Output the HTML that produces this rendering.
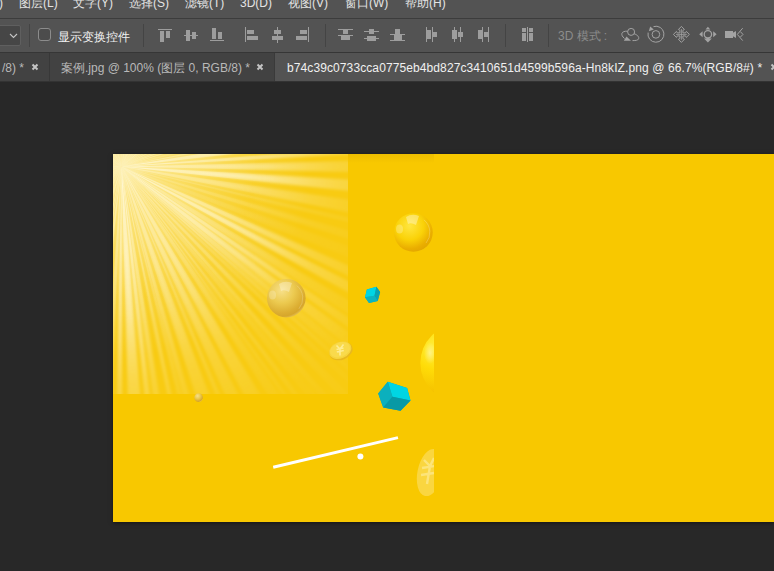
<!DOCTYPE html>
<html><head><meta charset="utf-8">
<style>
*{margin:0;padding:0;box-sizing:border-box}
html,body{width:774px;height:571px;overflow:hidden;background:#282828;font-family:"Liberation Sans",sans-serif;}
.abs{position:absolute}
.cj{display:inline-block;white-space:nowrap}
#menu{position:absolute;left:0;top:0;width:774px;height:18px;background:#535353}
#line1{position:absolute;left:0;top:18px;width:774px;height:1px;background:#3c3c3c}
#opts{position:absolute;left:0;top:19px;width:774px;height:33px;background:#535353}
#line2{position:absolute;left:0;top:52px;width:774px;height:1px;background:#363636}
#tabs{position:absolute;left:0;top:53px;width:774px;height:28px;background:#424242}
#canvas{position:absolute;left:0;top:81px;width:774px;height:490px;background:#282828}
.mt{position:absolute;top:-4px;font-size:12px;color:#e4e4e4;white-space:nowrap;line-height:14px}
.sep{position:absolute;width:1px;background:#444;top:24px;height:23px}
.ic{position:absolute;background:#9d9d9d}
.tt{position:absolute;top:61px;font-size:12px;color:#b9b9b9;white-space:nowrap;line-height:14px}
</style></head><body>
<div id="menu"></div>
<div id="line1"></div>
<div id="opts"></div>
<div id="line2"></div>
<div id="tabs"></div>
<div id="canvas"></div>
<div class="abs" style="left:0;top:81px;width:774px;height:1px;background:#333"></div>

<!-- menu text -->
<div class="mt" style="left:-1px">)</div>
<div class="mt" style="left:19px"><span class="cj" style="width:24px">图层</span>(L)</div>
<div class="mt" style="left:73px"><span class="cj" style="width:24px">文字</span>(Y)</div>
<div class="mt" style="left:129px"><span class="cj" style="width:24px">选择</span>(S)</div>
<div class="mt" style="left:185px"><span class="cj" style="width:24px">滤镜</span>(T)</div>
<div class="mt" style="left:240px">3D(D)</div>
<div class="mt" style="left:288px"><span class="cj" style="width:24px">视图</span>(V)</div>
<div class="mt" style="left:345px"><span class="cj" style="width:24px">窗口</span>(W)</div>
<div class="mt" style="left:405px"><span class="cj" style="width:24px">帮助</span>(H)</div>

<!-- options bar -->
<div class="abs" style="left:-2px;top:25px;width:23px;height:21px;background:#464646;border:1px solid #5f5f5f;border-radius:2px"></div>
<svg class="abs" style="left:9px;top:33px" width="10" height="6"><path d="M1 1 L4.5 4.5 L8 1" stroke="#c4c4c4" stroke-width="1.1" fill="none"/></svg>
<div class="sep" style="left:29px"></div>
<div class="abs" style="left:38px;top:28px;width:13px;height:13px;border:1px solid #8c8c8c;border-radius:3px;background:#4c4c4c"></div>
<div class="abs" style="left:58px;top:30px;font-size:12px;color:#f0f0f0;line-height:14px;white-space:nowrap"><span class="cj" style="width:72px">显示变换控件</span></div>
<div class="sep" style="left:143px"></div>
<div class="ic" style="left:158px;top:29px;width:14px;height:1px"></div>
<div class="ic" style="left:160px;top:31px;width:4px;height:11px"></div>
<div class="ic" style="left:166px;top:31px;width:4px;height:7px"></div>
<div class="ic" style="left:184px;top:35px;width:14px;height:1px"></div>
<div class="ic" style="left:186px;top:30px;width:4px;height:11px"></div>
<div class="ic" style="left:192px;top:32px;width:4px;height:7px"></div>
<div class="ic" style="left:212px;top:28px;width:4px;height:11px"></div>
<div class="ic" style="left:218px;top:32px;width:4px;height:7px"></div>
<div class="ic" style="left:210px;top:40px;width:14px;height:1px"></div>
<div class="ic" style="left:245px;top:27px;width:1px;height:15px"></div>
<div class="ic" style="left:247px;top:30px;width:7px;height:4px"></div>
<div class="ic" style="left:247px;top:36px;width:11px;height:4px"></div>
<div class="ic" style="left:277px;top:27px;width:1px;height:16px"></div>
<div class="ic" style="left:274px;top:30px;width:7px;height:4px"></div>
<div class="ic" style="left:272px;top:36px;width:11px;height:4px"></div>
<div class="ic" style="left:308px;top:27px;width:1px;height:15px"></div>
<div class="ic" style="left:300px;top:30px;width:7px;height:4px"></div>
<div class="ic" style="left:296px;top:36px;width:11px;height:4px"></div>
<div class="ic" style="left:338px;top:29px;width:15px;height:1px"></div>
<div class="ic" style="left:343px;top:30px;width:5px;height:4px"></div>
<div class="ic" style="left:338px;top:35px;width:15px;height:1px"></div>
<div class="ic" style="left:341px;top:36px;width:9px;height:4px"></div>
<div class="ic" style="left:369px;top:29px;width:5px;height:5px"></div>
<div class="ic" style="left:364px;top:31px;width:15px;height:1px"></div>
<div class="ic" style="left:367px;top:36px;width:9px;height:5px"></div>
<div class="ic" style="left:364px;top:38px;width:15px;height:1px"></div>
<div class="ic" style="left:395px;top:29px;width:5px;height:5px"></div>
<div class="ic" style="left:390px;top:34px;width:15px;height:1px"></div>
<div class="ic" style="left:394px;top:35px;width:8px;height:5px"></div>
<div class="ic" style="left:390px;top:40px;width:15px;height:1px"></div>
<div class="ic" style="left:426px;top:27px;width:1px;height:15px"></div>
<div class="ic" style="left:427px;top:30px;width:4px;height:9px"></div>
<div class="ic" style="left:432px;top:27px;width:1px;height:15px"></div>
<div class="ic" style="left:433px;top:32px;width:4px;height:5px"></div>
<div class="ic" style="left:452px;top:30px;width:5px;height:9px"></div>
<div class="ic" style="left:454px;top:27px;width:1px;height:15px"></div>
<div class="ic" style="left:458px;top:32px;width:5px;height:5px"></div>
<div class="ic" style="left:460px;top:27px;width:1px;height:15px"></div>
<div class="ic" style="left:478px;top:30px;width:4px;height:9px"></div>
<div class="ic" style="left:482px;top:27px;width:1px;height:15px"></div>
<div class="ic" style="left:484px;top:32px;width:4px;height:5px"></div>
<div class="ic" style="left:488px;top:27px;width:1px;height:15px"></div>
<div class="ic" style="left:522px;top:28px;width:4px;height:4px"></div>
<div class="ic" style="left:522px;top:33px;width:4px;height:8px"></div>
<div class="ic" style="left:527px;top:27px;width:1px;height:15px"></div>
<div class="ic" style="left:529px;top:28px;width:4px;height:4px"></div>
<div class="ic" style="left:529px;top:33px;width:4px;height:8px"></div>
<div class="sep" style="left:325px"></div>
<div class="sep" style="left:505px"></div>
<div class="sep" style="left:548px"></div>
<div class="abs" style="left:558px;top:29px;font-size:12px;color:#8c8c8c;line-height:14px;white-space:nowrap">3D <span class="cj" style="width:24px">模式</span><span style="margin-left:3px">:</span></div>
<svg class="abs" style="left:615px;top:22px" width="159" height="26" viewBox="615 22 159 26">
 <g fill="none" stroke="#a3a3a3" stroke-width="1">
  <circle cx="631.1" cy="31.9" r="3.5"/>
  <path d="M627.6 31.2 C 621.5 30.8, 619.8 34.5, 624.5 38.5"/>
  <path d="M634 33.6 C 637.5 35, 639.5 37, 638.5 39 C 637.8 40.3, 636 40.6, 632.5 40.6"/>
  <path d="M653.5 26.6 A8 8 0 1 1 648.1 32.6" stroke-width="1"/>
  <circle cx="655.9" cy="34.4" r="3.8"/>
  <path d="M681.40 26.40 L684.40 29.50 L682.90 30.30 L682.90 32.90 L685.50 32.90 L686.30 31.40 L689.40 34.40 L686.30 37.40 L685.50 35.90 L682.90 35.90 L682.90 38.50 L684.40 39.30 L681.40 42.40 L678.40 39.30 L679.90 38.50 L679.90 35.90 L677.30 35.90 L676.50 37.40 L673.40 34.40 L676.50 31.40 L677.30 32.90 L679.90 32.90 L679.90 30.30 L678.40 29.50Z" stroke-width="0.95"/>
  <path d="M681.4 29 V39.8 M676 34.4 H686.8" stroke-width="0.8"/>
  <path d="M742.7 28.2 L737.3 34.4 L742.7 40.6 M740.3 31.6 L743 34.4 L740.3 37.2"/>
 </g>
 <g fill="#a3a3a3">
  <path d="M623.8 40.8 L631 40.8 L626.5 36.6 Z"/>
  <path d="M648.8 31.2 L650.2 26.6 L653.8 29.6 Z"/>
  
  
  
  
  <rect x="725" y="31" width="8" height="7"/>
  <path d="M732.5 33 L736 31 L736 38 L732.5 36 Z"/>
 </g>
 <circle cx="707.9" cy="34.3" r="3.7" fill="none" stroke="#a3a3a3" stroke-width="1.3"/>
 <g fill="#a3a3a3">
  <path d="M707.9 26.8 L710.3 29.6 L705.5 29.6Z"/>
  <path d="M699.2 34.3 L702.6 31.3 L702.6 37.3Z"/>
  <path d="M716.6 34.3 L713.2 31.3 L713.2 37.3Z"/>
  <path d="M707.9 42.4 L711.8 38.6 L709.2 38.6 L709.2 38 L706.6 38 L706.6 38.6 L704 38.6Z"/>
 </g>
</svg>



<!-- tabs -->
<div class="tt" style="left:2px">/8) *</div>
<svg class="abs" style="left:31px;top:63px" width="8" height="8"><path d="M1.5 1.5 L6.5 6.5 M6.5 1.5 L1.5 6.5" stroke="#c4c4c4" stroke-width="2"/></svg>
<div class="abs" style="left:49px;top:53px;width:1px;height:28px;background:#383838"></div>
<div class="tt" style="left:61px"><span class="cj" style="width:24px">案例</span>.jpg @ 100% (<span class="cj" style="width:24px">图层</span> 0, RGB/8) *</div>
<svg class="abs" style="left:256px;top:63px" width="8" height="8"><path d="M1.5 1.5 L6.5 6.5 M6.5 1.5 L1.5 6.5" stroke="#c4c4c4" stroke-width="2"/></svg>
<div class="abs" style="left:274px;top:53px;width:1px;height:28px;background:#3a3a3a"></div>
<div class="abs" style="left:275px;top:53px;width:499px;height:28px;background:#535353"></div>
<div class="tt" style="left:287px;color:#f0f0f0;letter-spacing:0.1px">b74c39c0733cca0775eb4bd827c3410651d4599b596a-Hn8kIZ.png @ 66.7%(RGB/8#) *</div>
<svg class="abs" style="left:770px;top:63px" width="8" height="8"><path d="M1.5 1.5 L6.5 6.5 M6.5 1.5 L1.5 6.5" stroke="#c4c4c4" stroke-width="2"/></svg>

<!-- document -->
<div class="abs" style="left:113px;top:154px;width:661px;height:368px;box-shadow:0 1px 4px rgba(0,0,0,0.5)"></div>
<svg class="abs" style="left:113px;top:154px" width="661" height="368" viewBox="113 154 661 368">
 <defs>
  <radialGradient id="fade" gradientUnits="userSpaceOnUse" cx="121.5" cy="166.5" r="330">
   <stop offset="0" stop-color="#fff" stop-opacity="0.4"/>
   <stop offset="0.25" stop-color="#fff" stop-opacity="0.85"/>
   <stop offset="0.45" stop-color="#fff" stop-opacity="0.65"/>
   <stop offset="0.65" stop-color="#fff" stop-opacity="0.3"/>
   <stop offset="0.85" stop-color="#fff" stop-opacity="0.1"/>
   <stop offset="1" stop-color="#fff" stop-opacity="0.03"/>
  </radialGradient>
  <mask id="rm" maskUnits="userSpaceOnUse" x="113" y="154" width="235" height="240">
   <rect x="113" y="154" width="235" height="240" fill="url(#fade)"/>
  </mask>
  <radialGradient id="glow" gradientUnits="userSpaceOnUse" cx="121.5" cy="166.5" r="190">
   <stop offset="0" stop-color="#fffbe6" stop-opacity="0.7"/>
   <stop offset="0.15" stop-color="#fff8d8" stop-opacity="0.5"/>
   <stop offset="0.45" stop-color="#fff3c0" stop-opacity="0.28"/>
   <stop offset="0.7" stop-color="#fff3c0" stop-opacity="0.1"/>
   <stop offset="1" stop-color="#fff" stop-opacity="0"/>
  </radialGradient>
  <linearGradient id="topshade" x1="0" y1="0" x2="0" y2="1">
   <stop offset="0" stop-color="#d9a800" stop-opacity="0.35"/>
   <stop offset="1" stop-color="#d9a800" stop-opacity="0"/>
  </linearGradient>
  <radialGradient id="sph" cx="0.4" cy="0.33" r="0.72">
   <stop offset="0" stop-color="#ffe640"/>
   <stop offset="0.5" stop-color="#fad208"/>
   <stop offset="0.82" stop-color="#eaae00"/>
   <stop offset="0.95" stop-color="#e4a800"/>
   <stop offset="1" stop-color="#ecbc20"/>
  </radialGradient>
  <radialGradient id="sph2" cx="0.38" cy="0.3" r="0.72">
   <stop offset="0" stop-color="#f7e08a"/>
   <stop offset="0.45" stop-color="#ecca50"/>
   <stop offset="0.8" stop-color="#dcae32"/>
   <stop offset="0.93" stop-color="#d6a62c"/>
   <stop offset="1" stop-color="#e2ba4a"/>
  </radialGradient>
  <filter id="bl" x="-5%" y="-5%" width="110%" height="110%"><feGaussianBlur stdDeviation="0.5"/></filter>
  <radialGradient id="sph3" cx="0.2" cy="0.3" r="0.8">
   <stop offset="0" stop-color="#fff040"/>
   <stop offset="0.35" stop-color="#ffdc08"/>
   <stop offset="0.7" stop-color="#f6c400"/>
   <stop offset="1" stop-color="#e8b000"/>
  </radialGradient>
  <radialGradient id="hl">
   <stop offset="0" stop-color="#fff8c0" stop-opacity="0.6"/>
   <stop offset="1" stop-color="#fff8c0" stop-opacity="0"/>
  </radialGradient>
  <filter id="bl2" x="-5%" y="-5%" width="110%" height="110%"><feGaussianBlur stdDeviation="1.8"/></filter>
  <radialGradient id="faden" gradientUnits="userSpaceOnUse" cx="121.5" cy="166.5" r="160">
   <stop offset="0" stop-color="#fff" stop-opacity="1"/>
   <stop offset="0.4" stop-color="#fff" stop-opacity="0.6"/>
   <stop offset="1" stop-color="#fff" stop-opacity="0"/>
  </radialGradient>
  <mask id="rmn" maskUnits="userSpaceOnUse" x="113" y="154" width="235" height="240">
   <rect x="113" y="154" width="235" height="240" fill="url(#faden)"/>
  </mask>
  <clipPath id="lay"><rect x="113" y="154" width="321" height="368"/></clipPath>
 </defs>
 <rect x="113" y="154" width="661" height="368" fill="#f8c800"/>
 <rect x="348" y="154" width="86" height="9" fill="url(#topshade)"/>
 <rect x="113" y="154" width="235" height="240" fill="#fff" fill-opacity="0.07"/>
 <g mask="url(#rm)" fill="#fffae0" filter="url(#bl2)">
<path d="M121.5 166.5 L-298.5 166.5 L-298.2 150.2Z" fill-opacity="0.46"/>
<path d="M121.5 166.5 L-297.5 137.0 L-295.3 114.7Z" fill-opacity="0.46"/>
<path d="M121.5 166.5 L-293.2 99.8 L-292.4 94.9Z" fill-opacity="0.38"/>
<path d="M121.5 166.5 L-289.5 79.9 L-285.7 63.6Z" fill-opacity="0.51"/>
<path d="M121.5 166.5 L-284.7 59.9 L-281.2 47.1Z" fill-opacity="0.31"/>
<path d="M121.5 166.5 L-278.3 37.7 L-273.3 23.2Z" fill-opacity="0.24"/>
<path d="M121.5 166.5 L-271.5 18.3 L-268.0 9.3Z" fill-opacity="0.51"/>
<path d="M121.5 166.5 L-263.0 -2.6 L-259.9 -9.4Z" fill-opacity="0.48"/>
<path d="M121.5 166.5 L-258.2 -13.1 L-251.0 -27.6Z" fill-opacity="0.28"/>
<path d="M121.5 166.5 L-249.9 -29.6 L-239.7 -47.9Z" fill-opacity="0.30"/>
<path d="M121.5 166.5 L-237.0 -52.4 L-224.4 -71.7Z" fill-opacity="0.50"/>
<path d="M121.5 166.5 L-220.8 -76.8 L-207.2 -95.0Z" fill-opacity="0.40"/>
<path d="M121.5 166.5 L-199.8 -104.0 L-194.4 -110.3Z" fill-opacity="0.52"/>
<path d="M121.5 166.5 L-186.5 -119.1 L-170.5 -135.4Z" fill-opacity="0.51"/>
<path d="M121.5 166.5 L-165.9 -139.8 L-157.6 -147.4Z" fill-opacity="0.29"/>
<path d="M121.5 166.5 L-154.4 -150.2 L-150.1 -153.9Z" fill-opacity="0.33"/>
<path d="M121.5 166.5 L-141.9 -160.6 L-138.5 -163.4Z" fill-opacity="0.44"/>
<path d="M121.5 166.5 L-133.0 -167.6 L-124.7 -173.8Z" fill-opacity="0.49"/>
<path d="M121.5 166.5 L-117.5 -178.9 L-108.8 -184.7Z" fill-opacity="0.38"/>
<path d="M121.5 166.5 L-98.7 -191.2 L-94.0 -194.0Z" fill-opacity="0.53"/>
<path d="M121.5 166.5 L-91.8 -195.3 L-75.5 -204.4Z" fill-opacity="0.49"/>
<path d="M121.5 166.5 L-73.4 -205.6 L-56.0 -214.2Z" fill-opacity="0.35"/>
<path d="M121.5 166.5 L-46.6 -218.4 L-42.4 -220.2Z" fill-opacity="0.25"/>
<path d="M121.5 166.5 L-38.1 -222.0 L-16.9 -230.0Z" fill-opacity="0.30"/>
<path d="M121.5 166.5 L-4.9 -234.0 L16.4 -240.1Z" fill-opacity="0.52"/>
<path d="M121.5 166.5 L23.2 -241.8 L34.1 -244.3Z" fill-opacity="0.40"/>
<path d="M121.5 166.5 L46.8 -246.8 L53.2 -247.9Z" fill-opacity="0.46"/>
<path d="M121.5 166.5 L66.4 -249.9 L87.0 -252.1Z" fill-opacity="0.25"/>
<path d="M121.5 166.5 L102.4 -253.1 L108.5 -253.3Z" fill-opacity="0.34"/>
<path d="M121.5 166.5 L119.2 -253.5 L141.1 -253.0Z" fill-opacity="0.34"/>
<path d="M121.5 166.5 L156.1 -252.1 L170.8 -250.6Z" fill-opacity="0.33"/>
<path d="M121.5 166.5 L177.4 -249.8 L185.1 -248.7Z" fill-opacity="0.26"/>
<path d="M121.5 166.5 L189.3 -248.0 L206.6 -244.8Z" fill-opacity="0.54"/>
<path d="M121.5 166.5 L210.9 -243.9 L216.1 -242.7Z" fill-opacity="0.54"/>
<path d="M121.5 166.5 L225.5 -240.4 L237.2 -237.3Z" fill-opacity="0.31"/>
<path d="M121.5 166.5 L247.2 -234.2 L266.3 -227.8Z" fill-opacity="0.38"/>
<path d="M121.5 166.5 L273.8 -224.9 L278.9 -222.9Z" fill-opacity="0.51"/>
<path d="M121.5 166.5 L281.4 -221.9 L294.0 -216.4Z" fill-opacity="0.49"/>
<path d="M121.5 166.5 L297.7 -214.8 L314.2 -206.7Z" fill-opacity="0.52"/>
<path d="M121.5 166.5 L323.9 -201.5 L340.6 -191.8Z" fill-opacity="0.27"/>
<path d="M121.5 166.5 L347.6 -187.4 L353.7 -183.5Z" fill-opacity="0.49"/>
<path d="M121.5 166.5 L358.9 -179.9 L369.6 -172.4Z" fill-opacity="0.54"/>
<path d="M121.5 166.5 L380.8 -163.9 L398.5 -149.2Z" fill-opacity="0.38"/>
<path d="M121.5 166.5 L405.2 -143.2 L418.4 -130.6Z" fill-opacity="0.38"/>
<path d="M121.5 166.5 L422.8 -126.1 L431.1 -117.3Z" fill-opacity="0.28"/>
<path d="M121.5 166.5 L436.1 -111.8 L451.0 -94.0Z" fill-opacity="0.53"/>
<path d="M121.5 166.5 L457.7 -85.3 L465.8 -74.0Z" fill-opacity="0.34"/>
<path d="M121.5 166.5 L467.8 -71.2 L473.1 -63.2Z" fill-opacity="0.47"/>
<path d="M121.5 166.5 L480.7 -51.1 L486.4 -41.4Z" fill-opacity="0.48"/>
<path d="M121.5 166.5 L492.7 -30.0 L500.6 -14.3Z" fill-opacity="0.44"/>
<path d="M121.5 166.5 L505.9 -2.7 L510.3 7.8Z" fill-opacity="0.45"/>
<path d="M121.5 166.5 L512.6 13.4 L517.4 26.2Z" fill-opacity="0.47"/>
<path d="M121.5 166.5 L521.2 37.4 L524.1 47.0Z" fill-opacity="0.52"/>
<path d="M121.5 166.5 L527.2 57.8 L530.9 72.8Z" fill-opacity="0.24"/>
<path d="M121.5 166.5 L533.0 82.4 L534.7 91.4Z" fill-opacity="0.53"/>
<path d="M121.5 166.5 L536.2 99.9 L538.9 119.7Z" fill-opacity="0.77"/>
<path d="M121.5 166.5 L540.2 133.0 L540.9 144.0Z" fill-opacity="0.83"/>
<path d="M121.5 166.5 L541.4 156.4 L541.4 176.6Z" fill-opacity="0.66"/>
<path d="M121.5 166.5 L540.8 190.5 L539.1 211.4Z" fill-opacity="0.86"/>
<path d="M121.5 166.5 L537.1 227.1 L533.2 249.4Z" fill-opacity="0.46"/>
<path d="M121.5 166.5 L531.2 258.8 L529.5 266.1Z" fill-opacity="0.29"/>
<path d="M121.5 166.5 L525.6 280.9 L521.7 293.8Z" fill-opacity="0.26"/>
<path d="M121.5 166.5 L517.9 305.4 L511.4 322.6Z" fill-opacity="0.17"/>
<path d="M121.5 166.5 L506.4 334.6 L499.9 348.7Z" fill-opacity="0.63"/>
<path d="M121.5 166.5 L496.4 355.9 L488.8 370.3Z" fill-opacity="0.83"/>
<path d="M121.5 166.5 L483.3 379.9 L473.7 395.3Z" fill-opacity="0.43"/>
<path d="M121.5 166.5 L471.3 399.0 L464.0 409.6Z" fill-opacity="0.76"/>
<path d="M121.5 166.5 L461.0 413.8 L450.4 427.7Z" fill-opacity="0.75"/>
<path d="M121.5 166.5 L448.6 429.9 L440.1 440.2Z" fill-opacity="0.54"/>
<path d="M121.5 166.5 L438.2 442.4 L433.5 447.6Z" fill-opacity="0.59"/>
<path d="M121.5 166.5 L430.4 451.1 L424.8 457.0Z" fill-opacity="0.39"/>
<path d="M121.5 166.5 L418.8 463.2 L410.4 471.3Z" fill-opacity="0.48"/>
<path d="M121.5 166.5 L402.8 478.4 L396.1 484.3Z" fill-opacity="0.49"/>
<path d="M121.5 166.5 L394.4 485.8 L385.1 493.5Z" fill-opacity="0.33"/>
<path d="M121.5 166.5 L378.9 498.4 L373.6 502.4Z" fill-opacity="0.54"/>
<path d="M121.5 166.5 L367.7 506.8 L363.5 509.8Z" fill-opacity="0.49"/>
<path d="M121.5 166.5 L360.6 511.8 L348.3 520.0Z" fill-opacity="0.40"/>
<path d="M121.5 166.5 L339.6 525.4 L319.9 536.7Z" fill-opacity="0.60"/>
<path d="M121.5 166.5 L312.8 540.4 L294.9 549.0Z" fill-opacity="0.56"/>
<path d="M121.5 166.5 L288.2 552.0 L281.6 554.8Z" fill-opacity="0.55"/>
<path d="M121.5 166.5 L272.3 558.5 L251.0 566.1Z" fill-opacity="0.57"/>
<path d="M121.5 166.5 L240.8 569.2 L230.1 572.2Z" fill-opacity="0.52"/>
<path d="M121.5 166.5 L227.9 572.8 L221.7 574.4Z" fill-opacity="0.51"/>
<path d="M121.5 166.5 L211.2 576.8 L204.3 578.3Z" fill-opacity="0.69"/>
<path d="M121.5 166.5 L189.9 580.9 L178.5 582.6Z" fill-opacity="0.65"/>
<path d="M121.5 166.5 L173.2 583.3 L163.3 584.4Z" fill-opacity="0.93"/>
<path d="M121.5 166.5 L155.8 585.1 L133.1 586.3Z" fill-opacity="0.90"/>
<path d="M121.5 166.5 L122.6 586.5 L113.3 586.4Z" fill-opacity="0.94"/>
<path d="M121.5 166.5 L104.2 586.1 L91.9 585.5Z" fill-opacity="0.59"/>
<path d="M121.5 166.5 L76.0 584.0 L62.4 582.3Z" fill-opacity="0.57"/>
<path d="M121.5 166.5 L53.6 581.0 L47.0 579.8Z" fill-opacity="0.62"/>
<path d="M121.5 166.5 L38.8 578.3 L29.0 576.2Z" fill-opacity="0.57"/>
<path d="M121.5 166.5 L15.7 573.0 L11.2 571.8Z" fill-opacity="0.40"/>
<path d="M121.5 166.5 L5.4 570.1 L-15.8 563.4Z" fill-opacity="0.47"/>
<path d="M121.5 166.5 L-21.1 561.6 L-30.0 558.2Z" fill-opacity="0.29"/>
<path d="M121.5 166.5 L-44.8 552.2 L-53.9 548.1Z" fill-opacity="0.42"/>
<path d="M121.5 166.5 L-61.8 544.4 L-76.7 536.8Z" fill-opacity="0.42"/>
<path d="M121.5 166.5 L-87.7 530.7 L-93.4 527.3Z" fill-opacity="0.47"/>
<path d="M121.5 166.5 L-98.9 524.0 L-111.2 516.2Z" fill-opacity="0.34"/>
<path d="M121.5 166.5 L-116.4 512.6 L-128.2 504.2Z" fill-opacity="0.38"/>
<path d="M121.5 166.5 L-134.0 499.9 L-148.5 488.2Z" fill-opacity="0.42"/>
<path d="M121.5 166.5 L-150.6 486.5 L-157.5 480.4Z" fill-opacity="0.38"/>
<path d="M121.5 166.5 L-168.5 470.3 L-183.5 455.2Z" fill-opacity="0.40"/>
<path d="M121.5 166.5 L-185.2 453.4 L-198.0 439.1Z" fill-opacity="0.37"/>
<path d="M121.5 166.5 L-204.5 431.3 L-215.5 417.1Z" fill-opacity="0.43"/>
<path d="M121.5 166.5 L-220.8 409.9 L-232.9 391.9Z" fill-opacity="0.36"/>
<path d="M121.5 166.5 L-237.0 385.4 L-247.3 367.5Z" fill-opacity="0.30"/>
<path d="M121.5 166.5 L-250.3 361.9 L-259.2 343.8Z" fill-opacity="0.26"/>
<path d="M121.5 166.5 L-264.9 331.1 L-271.5 314.8Z" fill-opacity="0.37"/>
<path d="M121.5 166.5 L-273.6 309.0 L-279.7 290.7Z" fill-opacity="0.51"/>
<path d="M121.5 166.5 L-280.9 286.7 L-284.6 273.7Z" fill-opacity="0.40"/>
<path d="M121.5 166.5 L-286.8 264.8 L-289.2 254.4Z" fill-opacity="0.29"/>
<path d="M121.5 166.5 L-291.2 244.2 L-294.5 224.6Z" fill-opacity="0.26"/>
<path d="M121.5 166.5 L-295.2 219.3 L-297.2 199.4Z" fill-opacity="0.48"/>
<path d="M121.5 166.5 L-298.0 187.9 L-298.2 183.1Z" fill-opacity="0.46"/>
<path d="M121.5 166.5 L-298.5 167.2 L-297.9 143.8Z" fill-opacity="0.45"/>
 </g>
 <g mask="url(#rmn)" fill="#fffae0" filter="url(#bl)">
<path d="M121.5 166.5 L-298.5 166.5 L-298.2 150.2Z" fill-opacity="0.46"/>
<path d="M121.5 166.5 L-297.5 137.0 L-295.3 114.7Z" fill-opacity="0.46"/>
<path d="M121.5 166.5 L-293.2 99.8 L-292.4 94.9Z" fill-opacity="0.38"/>
<path d="M121.5 166.5 L-289.5 79.9 L-285.7 63.6Z" fill-opacity="0.51"/>
<path d="M121.5 166.5 L-284.7 59.9 L-281.2 47.1Z" fill-opacity="0.31"/>
<path d="M121.5 166.5 L-278.3 37.7 L-273.3 23.2Z" fill-opacity="0.24"/>
<path d="M121.5 166.5 L-271.5 18.3 L-268.0 9.3Z" fill-opacity="0.51"/>
<path d="M121.5 166.5 L-263.0 -2.6 L-259.9 -9.4Z" fill-opacity="0.48"/>
<path d="M121.5 166.5 L-258.2 -13.1 L-251.0 -27.6Z" fill-opacity="0.28"/>
<path d="M121.5 166.5 L-249.9 -29.6 L-239.7 -47.9Z" fill-opacity="0.30"/>
<path d="M121.5 166.5 L-237.0 -52.4 L-224.4 -71.7Z" fill-opacity="0.50"/>
<path d="M121.5 166.5 L-220.8 -76.8 L-207.2 -95.0Z" fill-opacity="0.40"/>
<path d="M121.5 166.5 L-199.8 -104.0 L-194.4 -110.3Z" fill-opacity="0.52"/>
<path d="M121.5 166.5 L-186.5 -119.1 L-170.5 -135.4Z" fill-opacity="0.51"/>
<path d="M121.5 166.5 L-165.9 -139.8 L-157.6 -147.4Z" fill-opacity="0.29"/>
<path d="M121.5 166.5 L-154.4 -150.2 L-150.1 -153.9Z" fill-opacity="0.33"/>
<path d="M121.5 166.5 L-141.9 -160.6 L-138.5 -163.4Z" fill-opacity="0.44"/>
<path d="M121.5 166.5 L-133.0 -167.6 L-124.7 -173.8Z" fill-opacity="0.49"/>
<path d="M121.5 166.5 L-117.5 -178.9 L-108.8 -184.7Z" fill-opacity="0.38"/>
<path d="M121.5 166.5 L-98.7 -191.2 L-94.0 -194.0Z" fill-opacity="0.53"/>
<path d="M121.5 166.5 L-91.8 -195.3 L-75.5 -204.4Z" fill-opacity="0.49"/>
<path d="M121.5 166.5 L-73.4 -205.6 L-56.0 -214.2Z" fill-opacity="0.35"/>
<path d="M121.5 166.5 L-46.6 -218.4 L-42.4 -220.2Z" fill-opacity="0.25"/>
<path d="M121.5 166.5 L-38.1 -222.0 L-16.9 -230.0Z" fill-opacity="0.30"/>
<path d="M121.5 166.5 L-4.9 -234.0 L16.4 -240.1Z" fill-opacity="0.52"/>
<path d="M121.5 166.5 L23.2 -241.8 L34.1 -244.3Z" fill-opacity="0.40"/>
<path d="M121.5 166.5 L46.8 -246.8 L53.2 -247.9Z" fill-opacity="0.46"/>
<path d="M121.5 166.5 L66.4 -249.9 L87.0 -252.1Z" fill-opacity="0.25"/>
<path d="M121.5 166.5 L102.4 -253.1 L108.5 -253.3Z" fill-opacity="0.34"/>
<path d="M121.5 166.5 L119.2 -253.5 L141.1 -253.0Z" fill-opacity="0.34"/>
<path d="M121.5 166.5 L156.1 -252.1 L170.8 -250.6Z" fill-opacity="0.33"/>
<path d="M121.5 166.5 L177.4 -249.8 L185.1 -248.7Z" fill-opacity="0.26"/>
<path d="M121.5 166.5 L189.3 -248.0 L206.6 -244.8Z" fill-opacity="0.54"/>
<path d="M121.5 166.5 L210.9 -243.9 L216.1 -242.7Z" fill-opacity="0.54"/>
<path d="M121.5 166.5 L225.5 -240.4 L237.2 -237.3Z" fill-opacity="0.31"/>
<path d="M121.5 166.5 L247.2 -234.2 L266.3 -227.8Z" fill-opacity="0.38"/>
<path d="M121.5 166.5 L273.8 -224.9 L278.9 -222.9Z" fill-opacity="0.51"/>
<path d="M121.5 166.5 L281.4 -221.9 L294.0 -216.4Z" fill-opacity="0.49"/>
<path d="M121.5 166.5 L297.7 -214.8 L314.2 -206.7Z" fill-opacity="0.52"/>
<path d="M121.5 166.5 L323.9 -201.5 L340.6 -191.8Z" fill-opacity="0.27"/>
<path d="M121.5 166.5 L347.6 -187.4 L353.7 -183.5Z" fill-opacity="0.49"/>
<path d="M121.5 166.5 L358.9 -179.9 L369.6 -172.4Z" fill-opacity="0.54"/>
<path d="M121.5 166.5 L380.8 -163.9 L398.5 -149.2Z" fill-opacity="0.38"/>
<path d="M121.5 166.5 L405.2 -143.2 L418.4 -130.6Z" fill-opacity="0.38"/>
<path d="M121.5 166.5 L422.8 -126.1 L431.1 -117.3Z" fill-opacity="0.28"/>
<path d="M121.5 166.5 L436.1 -111.8 L451.0 -94.0Z" fill-opacity="0.53"/>
<path d="M121.5 166.5 L457.7 -85.3 L465.8 -74.0Z" fill-opacity="0.34"/>
<path d="M121.5 166.5 L467.8 -71.2 L473.1 -63.2Z" fill-opacity="0.47"/>
<path d="M121.5 166.5 L480.7 -51.1 L486.4 -41.4Z" fill-opacity="0.48"/>
<path d="M121.5 166.5 L492.7 -30.0 L500.6 -14.3Z" fill-opacity="0.44"/>
<path d="M121.5 166.5 L505.9 -2.7 L510.3 7.8Z" fill-opacity="0.45"/>
<path d="M121.5 166.5 L512.6 13.4 L517.4 26.2Z" fill-opacity="0.47"/>
<path d="M121.5 166.5 L521.2 37.4 L524.1 47.0Z" fill-opacity="0.52"/>
<path d="M121.5 166.5 L527.2 57.8 L530.9 72.8Z" fill-opacity="0.24"/>
<path d="M121.5 166.5 L533.0 82.4 L534.7 91.4Z" fill-opacity="0.53"/>
<path d="M121.5 166.5 L536.2 99.9 L538.9 119.7Z" fill-opacity="0.77"/>
<path d="M121.5 166.5 L540.2 133.0 L540.9 144.0Z" fill-opacity="0.83"/>
<path d="M121.5 166.5 L541.4 156.4 L541.4 176.6Z" fill-opacity="0.66"/>
<path d="M121.5 166.5 L540.8 190.5 L539.1 211.4Z" fill-opacity="0.86"/>
<path d="M121.5 166.5 L537.1 227.1 L533.2 249.4Z" fill-opacity="0.46"/>
<path d="M121.5 166.5 L531.2 258.8 L529.5 266.1Z" fill-opacity="0.29"/>
<path d="M121.5 166.5 L525.6 280.9 L521.7 293.8Z" fill-opacity="0.26"/>
<path d="M121.5 166.5 L517.9 305.4 L511.4 322.6Z" fill-opacity="0.17"/>
<path d="M121.5 166.5 L506.4 334.6 L499.9 348.7Z" fill-opacity="0.63"/>
<path d="M121.5 166.5 L496.4 355.9 L488.8 370.3Z" fill-opacity="0.83"/>
<path d="M121.5 166.5 L483.3 379.9 L473.7 395.3Z" fill-opacity="0.43"/>
<path d="M121.5 166.5 L471.3 399.0 L464.0 409.6Z" fill-opacity="0.76"/>
<path d="M121.5 166.5 L461.0 413.8 L450.4 427.7Z" fill-opacity="0.75"/>
<path d="M121.5 166.5 L448.6 429.9 L440.1 440.2Z" fill-opacity="0.54"/>
<path d="M121.5 166.5 L438.2 442.4 L433.5 447.6Z" fill-opacity="0.59"/>
<path d="M121.5 166.5 L430.4 451.1 L424.8 457.0Z" fill-opacity="0.39"/>
<path d="M121.5 166.5 L418.8 463.2 L410.4 471.3Z" fill-opacity="0.48"/>
<path d="M121.5 166.5 L402.8 478.4 L396.1 484.3Z" fill-opacity="0.49"/>
<path d="M121.5 166.5 L394.4 485.8 L385.1 493.5Z" fill-opacity="0.33"/>
<path d="M121.5 166.5 L378.9 498.4 L373.6 502.4Z" fill-opacity="0.54"/>
<path d="M121.5 166.5 L367.7 506.8 L363.5 509.8Z" fill-opacity="0.49"/>
<path d="M121.5 166.5 L360.6 511.8 L348.3 520.0Z" fill-opacity="0.40"/>
<path d="M121.5 166.5 L339.6 525.4 L319.9 536.7Z" fill-opacity="0.60"/>
<path d="M121.5 166.5 L312.8 540.4 L294.9 549.0Z" fill-opacity="0.56"/>
<path d="M121.5 166.5 L288.2 552.0 L281.6 554.8Z" fill-opacity="0.55"/>
<path d="M121.5 166.5 L272.3 558.5 L251.0 566.1Z" fill-opacity="0.57"/>
<path d="M121.5 166.5 L240.8 569.2 L230.1 572.2Z" fill-opacity="0.52"/>
<path d="M121.5 166.5 L227.9 572.8 L221.7 574.4Z" fill-opacity="0.51"/>
<path d="M121.5 166.5 L211.2 576.8 L204.3 578.3Z" fill-opacity="0.69"/>
<path d="M121.5 166.5 L189.9 580.9 L178.5 582.6Z" fill-opacity="0.65"/>
<path d="M121.5 166.5 L173.2 583.3 L163.3 584.4Z" fill-opacity="0.93"/>
<path d="M121.5 166.5 L155.8 585.1 L133.1 586.3Z" fill-opacity="0.90"/>
<path d="M121.5 166.5 L122.6 586.5 L113.3 586.4Z" fill-opacity="0.94"/>
<path d="M121.5 166.5 L104.2 586.1 L91.9 585.5Z" fill-opacity="0.59"/>
<path d="M121.5 166.5 L76.0 584.0 L62.4 582.3Z" fill-opacity="0.57"/>
<path d="M121.5 166.5 L53.6 581.0 L47.0 579.8Z" fill-opacity="0.62"/>
<path d="M121.5 166.5 L38.8 578.3 L29.0 576.2Z" fill-opacity="0.57"/>
<path d="M121.5 166.5 L15.7 573.0 L11.2 571.8Z" fill-opacity="0.40"/>
<path d="M121.5 166.5 L5.4 570.1 L-15.8 563.4Z" fill-opacity="0.47"/>
<path d="M121.5 166.5 L-21.1 561.6 L-30.0 558.2Z" fill-opacity="0.29"/>
<path d="M121.5 166.5 L-44.8 552.2 L-53.9 548.1Z" fill-opacity="0.42"/>
<path d="M121.5 166.5 L-61.8 544.4 L-76.7 536.8Z" fill-opacity="0.42"/>
<path d="M121.5 166.5 L-87.7 530.7 L-93.4 527.3Z" fill-opacity="0.47"/>
<path d="M121.5 166.5 L-98.9 524.0 L-111.2 516.2Z" fill-opacity="0.34"/>
<path d="M121.5 166.5 L-116.4 512.6 L-128.2 504.2Z" fill-opacity="0.38"/>
<path d="M121.5 166.5 L-134.0 499.9 L-148.5 488.2Z" fill-opacity="0.42"/>
<path d="M121.5 166.5 L-150.6 486.5 L-157.5 480.4Z" fill-opacity="0.38"/>
<path d="M121.5 166.5 L-168.5 470.3 L-183.5 455.2Z" fill-opacity="0.40"/>
<path d="M121.5 166.5 L-185.2 453.4 L-198.0 439.1Z" fill-opacity="0.37"/>
<path d="M121.5 166.5 L-204.5 431.3 L-215.5 417.1Z" fill-opacity="0.43"/>
<path d="M121.5 166.5 L-220.8 409.9 L-232.9 391.9Z" fill-opacity="0.36"/>
<path d="M121.5 166.5 L-237.0 385.4 L-247.3 367.5Z" fill-opacity="0.30"/>
<path d="M121.5 166.5 L-250.3 361.9 L-259.2 343.8Z" fill-opacity="0.26"/>
<path d="M121.5 166.5 L-264.9 331.1 L-271.5 314.8Z" fill-opacity="0.37"/>
<path d="M121.5 166.5 L-273.6 309.0 L-279.7 290.7Z" fill-opacity="0.51"/>
<path d="M121.5 166.5 L-280.9 286.7 L-284.6 273.7Z" fill-opacity="0.40"/>
<path d="M121.5 166.5 L-286.8 264.8 L-289.2 254.4Z" fill-opacity="0.29"/>
<path d="M121.5 166.5 L-291.2 244.2 L-294.5 224.6Z" fill-opacity="0.26"/>
<path d="M121.5 166.5 L-295.2 219.3 L-297.2 199.4Z" fill-opacity="0.48"/>
<path d="M121.5 166.5 L-298.0 187.9 L-298.2 183.1Z" fill-opacity="0.46"/>
<path d="M121.5 166.5 L-298.5 167.2 L-297.9 143.8Z" fill-opacity="0.45"/>
 </g>
 <rect x="113" y="154" width="235" height="240" fill="url(#glow)"/>
 <!-- spheres -->
 <circle cx="286.3" cy="298.2" r="19.3" fill="url(#sph2)"/>
 <path d="M279 284 Q285 280 292 283 L289 292 Q284 289 281 291Z" fill="#fff" fill-opacity="0.3"/>
 <ellipse cx="272.5" cy="295" rx="3.5" ry="4.5" fill="#fff" fill-opacity="0.22"/>
 <path d="M296.9 285.6 A16.5 16.5 0 0 1 298.9 308.8" stroke="#fff" stroke-opacity="0.2" stroke-width="1" fill="none"/>
 <circle cx="413.4" cy="232.5" r="19.3" fill="url(#sph)"/>
 <path d="M406 217 Q412 213 419 216 L416 225 Q411 222 408 224Z" fill="#fff" fill-opacity="0.35"/>
 <ellipse cx="399.5" cy="229" rx="3.5" ry="4.5" fill="#fff" fill-opacity="0.25"/>
 <path d="M424.0 219.9 A16.5 16.5 0 0 1 426.0 243.1" stroke="#fff" stroke-opacity="0.22" stroke-width="1" fill="none"/>
 <circle cx="198.6" cy="397.6" r="4.3" fill="url(#sph2)"/>
 <g clip-path="url(#lay)">
  <circle cx="458.9" cy="363" r="38.6" fill="url(#sph3)"/>
  <ellipse cx="430" cy="353" rx="6" ry="11" fill="url(#hl)"/>
  <ellipse cx="430" cy="472.5" rx="12.5" ry="24" transform="rotate(12 430 472.5)" fill="#fad640"/>
  <path d="M424 460 L430 466 L434 458 M430 466 L427 484 M422 468 L435 466 M421 475 L434 473" stroke="#fce47a" stroke-width="2.4" fill="none"/>
 </g>
 <!-- coin -->
 <g transform="rotate(-22 340.2 350.2)">
  <ellipse cx="340.6" cy="351.4" rx="12" ry="8.6" fill="#e8b820"/>
  <ellipse cx="340.2" cy="350.2" rx="11.6" ry="8.2" fill="#f6d43c"/>
  <ellipse cx="340.2" cy="349.8" rx="10.4" ry="7.2" fill="#f9da4c"/>
 </g>
 <path d="M336.5 345.5 L340 349 L343.5 344.5 M340 349 L340 355.5 M336.5 349.5 L343.5 348 M336.8 352 L343.8 350.5" stroke="#fff0a0" stroke-width="1.6" fill="none" stroke-opacity="0.85"/>
 <!-- cubes -->
 <path d="M366.9 289.4 L376.4 286.8 L380.1 291.9 L377.7 301.1 L369 303 L365 297.3Z" fill="#0bb0bc"/>
 <path d="M366.9 289.4 L376.4 286.8 L374.5 295.7 L365 297.3Z" fill="#00d6e4"/>
 <path d="M376.4 286.8 L380.1 291.9 L377.7 301.1 L374.5 295.7Z" fill="#0aa3ae"/>
 <path d="M365 297.3 L374.5 295.7 L377.7 301.1 L369 303Z" fill="#0cb4c0"/>
 <path d="M387.8 381.7 L407.1 387.9 L410.5 400.6 L400.5 410.8 L383.2 407.5 L378.2 393.6Z" fill="#0aa6b2"/>
 <path d="M387.8 381.7 L407.1 387.9 L410.5 400.6 L392.4 396.7Z" fill="#00d5e3"/>
 <path d="M387.8 381.7 L392.4 396.7 L383.2 407.5 L378.2 393.6Z" fill="#0bb0bd"/>
 <path d="M392.4 396.7 L410.5 400.6 L400.5 410.8 L383.2 407.5Z" fill="#0899a5"/>
 <!-- line -->
 <line x1="273.2" y1="467.2" x2="398" y2="437.6" stroke="#fff" stroke-width="3"/>
 <circle cx="360.4" cy="456.6" r="3" fill="#fff"/>
</svg>
</body></html>
